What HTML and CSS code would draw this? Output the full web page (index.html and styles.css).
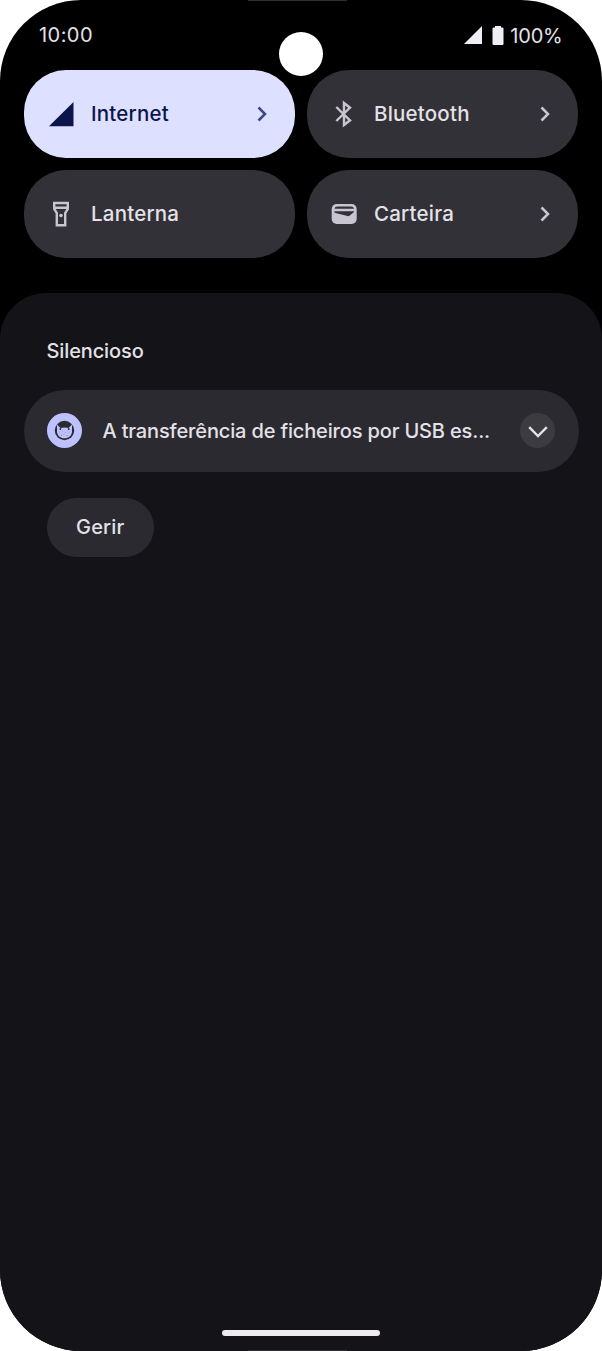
FILE: index.html
```html
<!DOCTYPE html>
<html lang="pt">
<head>
<meta charset="utf-8">
<title>Notificações</title>
<link rel="stylesheet" href="styles.css">
</head>
<body>
<main class="phone">
  <span class="speaker"></span>
  <span class="camera"></span>
  <header class="status">
    <span class="clock">10:00</span>
    <span class="status-right">
      <svg class="signal" viewBox="0 0 18 18"><path d="M18 0V18H0Z"/></svg>
      <svg class="battery" viewBox="0 0 12 19"><path d="M3 0H9V1.500H10.500Q11.500 1.500 11.500 2.500V17.800Q11.500 19 10.500 19H1.500Q.5 19 .5 17.800V2.500Q.5 1.500 1.500 1.500H3Z"/></svg>
      <span class="percent">100%</span>
    </span>
  </header>
  <section class="tiles">
    <div class="tile active">
      <svg class="icon" viewBox="0 0 28 28"><path d="M26.500 2V26.300H2Z"/></svg>
      <span class="label">Internet</span>
      <svg class="chevron" viewBox="0 0 10 16"><path d="M1.500 1.500L8 8L1.500 14.500"/></svg>
    </div>
    <div class="tile">
      <svg class="icon" viewBox="0 0 28 28"><path class="line" d="M6.300 7L20 20.300L14 25V3L20 7.700L6.300 21"/></svg>
      <span class="label">Bluetooth</span>
      <svg class="chevron" viewBox="0 0 10 16"><path d="M1.500 1.500L8 8L1.500 14.500"/></svg>
    </div>
    <div class="tile">
      <svg class="icon" viewBox="0 0 28 28"><path class="line" d="M7.200 3H20.800V9L18.200 13V25.300H9.800V13L7.200 9ZM7.200 7.700H20.800"/><circle cx="14" cy="15.500" r="1.800"/></svg>
      <span class="label">Lanterna</span>
    </div>
    <div class="tile">
      <svg class="icon" viewBox="0 0 28 28"><rect x="1.700" y="4" width="25" height="20" rx="5"/><path class="cut" d="M4.500 8.800Q4.800 6.600 7.500 6.600H21Q23.600 6.600 24 8.800ZM4.500 11.200H24V12L19.800 15.600Q18.800 16.400 17.600 16.100L4.500 12.800Z"/></svg>
      <span class="label">Carteira</span>
      <svg class="chevron" viewBox="0 0 10 16"><path d="M1.500 1.500L8 8L1.500 14.500"/></svg>
    </div>
  </section>
  <section class="shade">
    <h2 class="heading">Silencioso</h2>
    <article class="notice">
      <svg class="app" viewBox="0 0 35 35"><circle cx="17.500" cy="17.500" r="17.500" fill="#bdc2ff"/><circle cx="17.500" cy="17.500" r="9.700" fill="#2b2a30"/><path d="M10 11.500L13.500 15Q17.500 14 21.500 15L25 11.500V18.500C25 22.800 21.500 25.300 17.500 25.300S10 22.800 10 18.500Z" fill="#bdc2ff"/><g fill="#2b2a30"><circle cx="13.300" cy="16" r=".9"/><circle cx="21.700" cy="16" r=".9"/><circle cx="12.500" cy="19" r=".35"/><circle cx="15.500" cy="18" r=".35"/><circle cx="18.500" cy="19.500" r=".35"/><circle cx="22" cy="19" r=".35"/><circle cx="14.500" cy="22" r=".4"/><circle cx="17" cy="21.500" r=".35"/><circle cx="20" cy="22.500" r=".4"/></g></svg>
      <span class="title">A transferência de ficheiros por USB es...</span>
      <span class="expand"><svg viewBox="0 0 20 12"><path d="M1.200 1.200L10 10L18.800 1.200"/></svg></span>
    </article>
    <button class="manage"><span>Gerir</span></button>
  </section>
  <span class="home"></span>
  <span class="port"></span>
</main>
</body>
</html>
```
FILE: styles.css
```css
* { box-sizing: border-box; }
body { margin: 0; background: #fff; font-family: Inter, Roboto, sans-serif; }
.phone { position: relative; display: flex; flex-direction: column; width: 602px; height: 1351px; overflow: hidden; background: #000; border-radius: 81px; color: #e4e1e8; }
.speaker, .port { position: absolute; left: 248px; width: 99px; height: 1px; background: #303033; top: 0; }
.port { top: auto; bottom: 0; }
.camera { position: absolute; left: 278.500px; top: 32px; width: 44px; height: 44px; border-radius: 50%; background: #fff; }
.status { display: flex; justify-content: space-between; height: 70px; padding: 22px 39.500px 0 39px; font-size: 20px; line-height: 26px; }
.clock { letter-spacing: .45px; }
.status-right { display: flex; height: 26px; }
.signal { width: 18px; height: 18px; margin: 4px 10.500px 0 0; fill: #f0edf5; }
.battery { width: 12px; height: 19px; margin: 3.500px 6px 0 0; fill: #f0edf5; }
.percent { padding-top: 1px; letter-spacing: -.2px; }
.tiles { display: grid; grid-template-columns: 271.500px 271.500px; gap: 12px 11.500px; padding-left: 23.500px; }
.tile { display: flex; align-items: center; height: 88px; padding: 0 28px 0 24px; border-radius: 42px; background: #323137; }
.active { background: #dee0ff; color: #0b154b; }
.icon { width: 28px; height: 28px; margin: 0 16px 0 -.5px; fill: #c8c5d0; flex: none; }
.active .icon { fill: #0b154b; }
.icon .line { fill: none; stroke: #c8c5d0; stroke-width: 2.400; }
.icon .cut { fill: #323137; }
.label { flex: 1; font-size: 20.500px; font-weight: 500; line-height: 28px; white-space: nowrap; letter-spacing: .2px; }
.chevron { width: 10px; height: 16px; fill: none; stroke: #c8c5d0; stroke-width: 2.500; }
.active .chevron { stroke: #3d4588; }
.shade { flex: 1; margin-top: 35px; padding: 44px 23.500px 0; border-radius: 46px 46px 0 0; background: #141318; }
.heading { margin: 0 0 0 23px; font-size: 20px; line-height: 28px; font-weight: 500; letter-spacing: -.12px; }
.notice { display: flex; align-items: center; height: 82px; margin-top: 24.500px; padding: 0 23.500px; border-radius: 41px; background: #2b2a30; }
.app { width: 35px; height: 35px; margin-right: 20.500px; flex: none; }
.title { flex: 1; font-size: 20px; font-weight: 500; white-space: nowrap; letter-spacing: -.15px; }
.expand { display: flex; align-items: center; justify-content: center; width: 35px; height: 35px; border-radius: 50%; background: #3c3b40; flex: none; }
.expand svg { width: 20px; height: 12px; margin-top: 2px; fill: none; stroke: #e4e1e8; stroke-width: 2.400; }
.manage { display: flex; align-items: center; justify-content: center; width: 107.500px; height: 59px; margin: 26px 0 0 23px; padding: 0; border: 0; border-radius: 30px; background: #2b2a30; color: #e4e1e8; font: 500 20px/28px Inter, Roboto, sans-serif; letter-spacing: .2px; }
.home { position: absolute; left: 222px; bottom: 15px; width: 158px; height: 6px; border-radius: 3px; background: #edebef; }
```
